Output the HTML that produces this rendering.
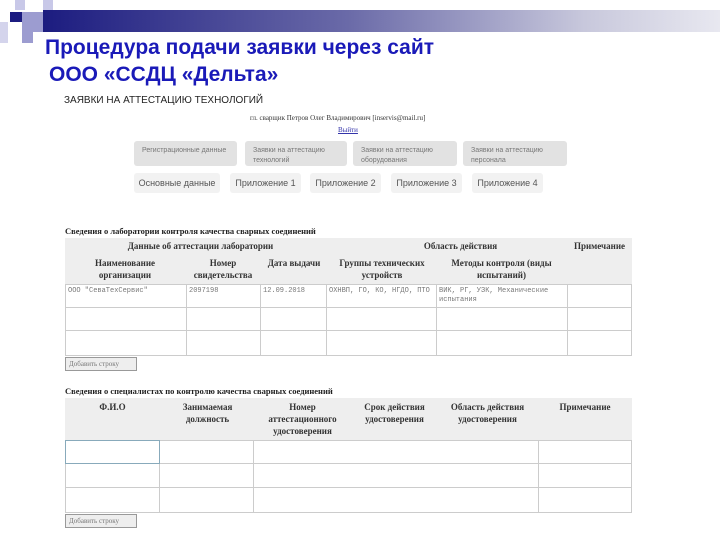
<!DOCTYPE html>
<html><head><meta charset="utf-8"><style>
*{margin:0;padding:0;box-sizing:border-box}
body{width:720px;height:540px;background:#fff;position:relative;overflow:hidden;font-family:"Liberation Sans",sans-serif}
.a{position:absolute}
.sq{position:absolute}
.t{color:#1a1ab8;font-weight:bold;font-size:21px;left:45px;white-space:nowrap}
.tab{position:absolute;background:#e2e2e2;border-radius:3px;font-size:7px;color:#777;padding:5px 8px;line-height:10px}
.btn{position:absolute;background:#f2f2f2;border-radius:3px;font-size:9px;color:#555;text-align:center;line-height:20px;height:20px}
.serif{font-family:"Liberation Serif",serif}
table{position:absolute;border-collapse:collapse;font-family:"Liberation Serif",serif;font-size:9px;table-layout:fixed}
td{border:1px solid #ccc}
.ab{position:absolute;border:1px solid #999;background:#eee;font-family:"Liberation Serif",serif;font-size:7px;color:#777;padding:1px 3px;height:14px;line-height:11px}
.mono{font-family:"Liberation Mono",monospace;font-size:7px;color:#777;vertical-align:top;padding:2px 2px;line-height:9px}
.hd{position:absolute;font-family:"Liberation Serif",serif;font-size:9px;font-weight:bold;color:#333;text-align:center;line-height:12px}
</style></head><body>
<div class="sq" style="left:15px;top:0;width:10px;height:10px;background:#c8c8e8"></div>
<div class="sq" style="left:43px;top:0;width:10px;height:10px;background:#c8c8e8"></div>
<div class="sq" style="left:10px;top:12px;width:12px;height:10px;background:#1c1c80"></div>
<div class="sq" style="left:22px;top:12px;width:21px;height:20px;background:#9c9cd0"></div>
<div class="sq" style="left:0;top:22px;width:8px;height:21px;background:#d4d4ec"></div>
<div class="sq" style="left:22px;top:32px;width:11px;height:11px;background:#9c9cd0"></div>
<div class="a" style="left:43px;top:10px;width:677px;height:22px;background:linear-gradient(90deg,#1c1c80,#6a6aa8 45%,#c8c8dc 80%,#e8e8f0)"></div>
<div class="a t" style="top:36px">Процедура подачи заявки через сайт</div>
<div class="a t" style="top:63px;left:49px">ООО «ССДЦ «Дельта»</div>
<div class="a" style="left:64px;top:95px;font-size:10px;color:#222">ЗАЯВКИ НА АТТЕСТАЦИЮ ТЕХНОЛОГИЙ</div>
<div class="a serif" style="left:250px;top:114px;font-size:7px;color:#333">гл. сварщик Петров Олег Владимирович [inservis@mail.ru]</div>
<div class="a serif" style="left:338px;top:126px;font-size:7px;color:#33a;text-decoration:underline">Выйти</div>
<div class="tab" style="left:134px;top:141px;width:103px;height:25px">Регистрационные данные</div>
<div class="tab" style="left:245px;top:141px;width:102px;height:25px">Заявки на аттестацию технологий</div>
<div class="tab" style="left:353px;top:141px;width:104px;height:25px">Заявки на аттестацию оборудования</div>
<div class="tab" style="left:463px;top:141px;width:104px;height:25px">Заявки на аттестацию персонала</div>
<div class="btn" style="left:134px;top:173px;width:86px">Основные данные</div>
<div class="btn" style="left:230px;top:173px;width:71px">Приложение 1</div>
<div class="btn" style="left:310px;top:173px;width:71px">Приложение 2</div>
<div class="btn" style="left:391px;top:173px;width:71px">Приложение 3</div>
<div class="btn" style="left:472px;top:173px;width:71px">Приложение 4</div>
<div class="a serif" style="left:65px;top:226px;font-size:8.5px;font-weight:bold;color:#222">Сведения о лаборатории контроля качества сварных соединений</div>
<div class="a" style="left:65px;top:238px;width:567px;height:46px;background:#eee"></div>
<div class="hd" style="left:75px;top:240px;width:251px">Данные об аттестации лаборатории</div>
<div class="hd" style="left:340px;top:240px;width:241px">Область действия</div>
<div class="hd" style="left:567px;top:240px;width:65px">Примечание</div>
<div class="hd" style="left:80px;top:257px;width:90px">Наименование организации</div>
<div class="hd" style="left:186px;top:257px;width:74px">Номер свидетельства</div>
<div class="hd" style="left:260px;top:257px;width:68px">Дата выдачи</div>
<div class="hd" style="left:328px;top:257px;width:108px">Группы технических устройств</div>
<div class="hd" style="left:436px;top:257px;width:131px">Методы контроля (виды испытаний)</div>
<table style="left:65px;top:284px;width:567px">
<colgroup><col style="width:121px"><col style="width:74px"><col style="width:66px"><col style="width:110px"><col style="width:131px"><col></colgroup>
<tr style="height:23px"><td class="mono">ООО "СеваТехСервис"</td><td class="mono">2097198</td><td class="mono">12.09.2018</td><td class="mono">ОХНВП, ГО, КО, НГДО, ПТО</td><td class="mono">ВИК, РГ, УЗК, Механические испытания</td><td></td></tr>
<tr style="height:23px"><td></td><td></td><td></td><td></td><td></td><td></td></tr>
<tr style="height:25px"><td></td><td></td><td></td><td></td><td></td><td></td></tr>
</table>
<div class="ab" style="left:65px;top:357px;width:72px">Добавить строку</div>
<div class="a serif" style="left:65px;top:386px;font-size:8.5px;font-weight:bold;color:#222">Сведения о специалистах по контролю качества сварных соединений</div>
<div class="a" style="left:65px;top:398px;width:567px;height:42px;background:#eee"></div>
<div class="hd" style="left:75px;top:401px;width:75px">Ф.И.О</div>
<div class="hd" style="left:170px;top:401px;width:75px">Занимаемая должность</div>
<div class="hd" style="left:260px;top:401px;width:85px">Номер аттестационного удостоверения</div>
<div class="hd" style="left:352px;top:401px;width:85px">Срок действия удостоверения</div>
<div class="hd" style="left:440px;top:401px;width:95px">Область действия удостоверения</div>
<div class="hd" style="left:545px;top:401px;width:80px">Примечание</div>
<table style="left:65px;top:440px;width:567px">
<colgroup><col style="width:94px"><col style="width:94px"><col style="width:285px"><col></colgroup>
<tr style="height:23px"><td style="border:1px solid #8ab"></td><td></td><td></td><td></td></tr>
<tr style="height:24px"><td></td><td></td><td></td><td></td></tr>
<tr style="height:25px"><td></td><td></td><td></td><td></td></tr>
</table>
<div class="ab" style="left:65px;top:514px;width:72px">Добавить строку</div>
</body></html>
